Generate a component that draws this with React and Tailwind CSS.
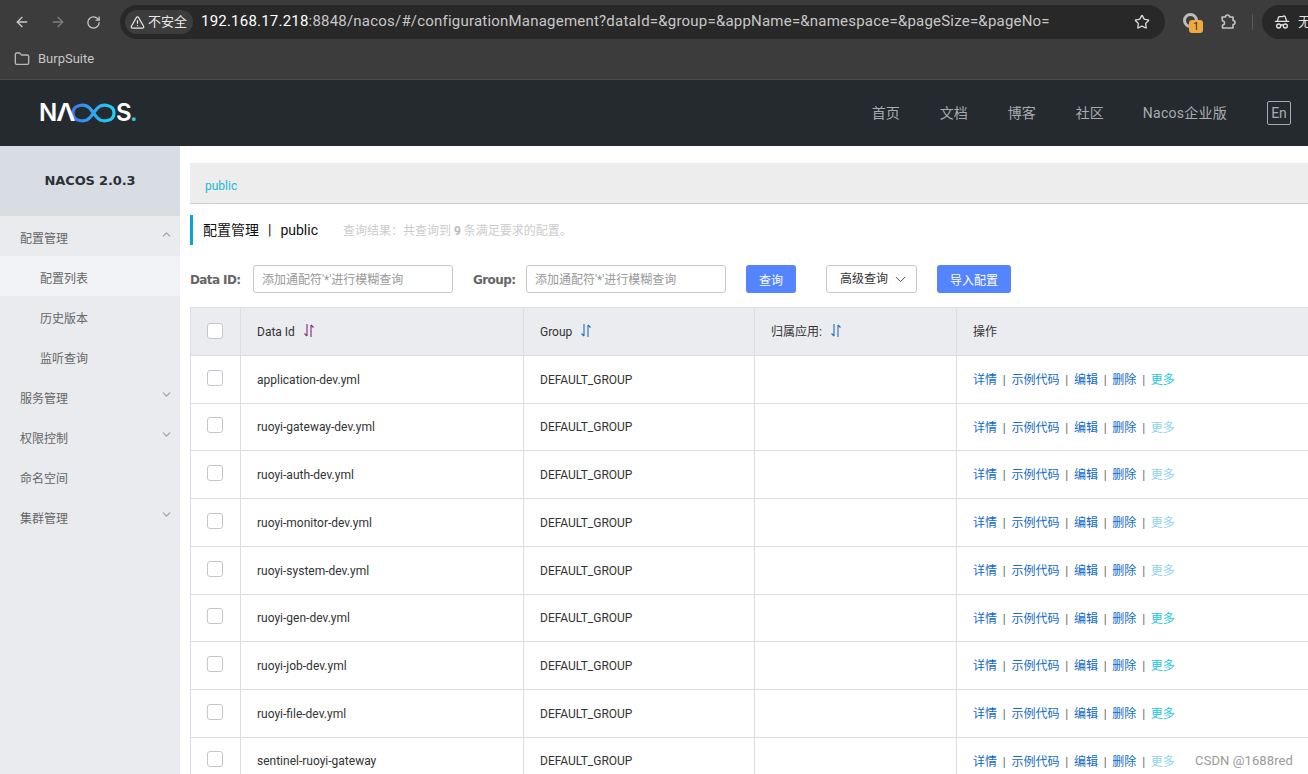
import { ArrowLeft, ArrowRight, RotateCw, Star, Folder, ChevronUp, ChevronDown, TriangleAlert, HatGlasses } from "lucide-react";

const FONT = "font-['Roboto','Noto_Sans_CJK_SC',sans-serif]";

const MENU = [
  { label: "配置管理", arrow: "up", active: true },
  { label: "配置列表", sub: true, selected: true },
  { label: "历史版本", sub: true },
  { label: "监听查询", sub: true },
  { label: "服务管理", arrow: "down" },
  { label: "权限控制", arrow: "down" },
  { label: "命名空间" },
  { label: "集群管理", arrow: "down" },
];

const ROWS = [
  { id: "application-dev.yml", h: "h-[48px]", more: "text-[#21c7e0]" },
  { id: "ruoyi-gateway-dev.yml", h: "h-[47px]", more: "text-[#8fd6e4]" },
  { id: "ruoyi-auth-dev.yml", h: "h-[48px]", more: "text-[#8fd6e4]" },
  { id: "ruoyi-monitor-dev.yml", h: "h-[48px]", more: "text-[#8fd6e4]" },
  { id: "ruoyi-system-dev.yml", h: "h-[48px]", more: "text-[#8fd6e4]" },
  { id: "ruoyi-gen-dev.yml", h: "h-[47px]", more: "text-[#21c7e0]" },
  { id: "ruoyi-job-dev.yml", h: "h-[48px]", more: "text-[#21c7e0]" },
  { id: "ruoyi-file-dev.yml", h: "h-[48px]", more: "text-[#21c7e0]" },
  { id: "sentinel-ruoyi-gateway", h: "h-[47px]", more: "text-[#8fd6e4]" },
];

function SortIcon({ color = "#1f6fb5" }) {
  return (
    <svg width="12" height="15" viewBox="0 0 12 15" fill="none" stroke={color} strokeWidth="1.1" className="ml-[8px] -mt-[2px]">
      <path d="M4 1v12M1.500 10.500 4 13" />
      <path d="M8 14V2M8 2l2.500 2.500" />
    </svg>
  );
}

function Checkbox() {
  return <div className="w-4 h-4 bg-white border border-[#c4c6cf] rounded-[3px]" />;
}

function Logo() {
  return (
    <div className="flex items-center h-[24px] -ml-px text-white font-['Inter',sans-serif] font-semibold text-[24px] leading-none">
      <span className="w-[17px]">N</span>
      <span className="ml-[1px] w-[14px] scale-x-110">Λ</span>
      <svg width="45" height="20" viewBox="0 0 45 20" fill="none" strokeWidth="3.2">
        <defs>
          <linearGradient id="nacosGrad" x1="0" x2="1" y1="0" y2="0">
            <stop offset="0" stopColor="#3a7bf0" />
            <stop offset="1" stopColor="#1fd2f5" />
          </linearGradient>
        </defs>
        <path d="M19 5.500C14 0 2 1.500 2 10s12 10 17 4.500L26 5.500C31 0 43 1.500 43 10s-12 10-17 4.500L19 5.500" stroke="url(#nacosGrad)" />
      </svg>
      <span className="w-[15px]">S</span>
      <span className="text-[#1fc8e8] -ml-px">.</span>
    </div>
  );
}

function BrowserBar() {
  return (
    <div className={`h-[80px] bg-[#3c3c3c] border-b border-[#4a4a4a] text-[#e3e3e3] ${FONT}`}>
      <div className="h-[40px] flex items-center pt-[4px]">
        <div className="w-[120px] flex items-center pl-[14px] gap-[20px] shrink-0">
          <ArrowLeft size={16} className="text-[#c9c9c9]" />
          <ArrowRight size={16} className="text-[#7d7d7d]" />
          <RotateCw size={15} className="text-[#c9c9c9]" />
        </div>
        <div className="w-[1045px] h-[34px] bg-[#282828] rounded-full flex items-center pl-[5px] pr-[15px] shrink-0">
          <div className="flex items-center gap-[3px] h-[24px] pl-[5px] pr-[6px] rounded-full bg-[#3d3d3d] text-[13px] text-[#e8e8e8]">
            <TriangleAlert size={15} />
            <span>不安全</span>
          </div>
          <div className="ml-[8px] flex-1 -mt-px text-[15px] tracking-[0.21px] whitespace-nowrap">
            <span className="text-white">192.168.17.218</span>
            <span className="text-[#c7c7c7]">:8848/nacos/#/configurationManagement?dataId=&amp;group=&amp;appName=&amp;namespace=&amp;pageSize=&amp;pageNo=</span>
          </div>
          <Star size={16} className="text-[#d8d8d8]" />
        </div>
        <div className="relative ml-[18px] w-[20px] h-[20px] shrink-0">
          <div className="w-[15px] h-[15px] rounded-full border-[3px] border-[#bcbcbc] mt-[1px]" />
          <div className="absolute left-[6px] top-[8px] w-[14px] h-[13px] rounded-[3px] bg-[#f0a93e] text-[#2a2a2a] text-[10px] leading-[13px] text-center">1</div>
        </div>
        <svg width="20" height="20" viewBox="0 0 20 20" fill="none" stroke="#c4c4c4" strokeWidth="1.6" strokeLinejoin="round" className="ml-[15px] shrink-0">
          <path d="M4 5h3.500a2 2 0 0 1 4 0H15v3.500a2 2 0 0 1 0 4V16H4.500v-3a2 2 0 0 0 0-4L4 5z" />
        </svg>
        <div className="ml-[14px] w-px h-[16px] bg-[#5a5a5a] shrink-0" />
        <div className="ml-[9px] flex-1 h-[34px] bg-[#282828] rounded-l-full flex items-center pl-[12px] gap-[8px] overflow-hidden whitespace-nowrap">
          <HatGlasses size={16} className="text-[#e3e3e3] shrink-0" />
          <span className="text-[13px]">无痕</span>
        </div>
      </div>
      <div className="h-[39px] flex items-center pl-[14px] gap-[8px] text-[#c7c7c7] text-[13px] pb-[1px]">
        <Folder size={16} className="text-[#b8b8b8]" />
        <span>BurpSuite</span>
      </div>
    </div>
  );
}

function Header() {
  return (
    <header className={`h-[66px] bg-[#252a2f] flex items-center pl-[40px] ${FONT}`}>
      <Logo />
      <nav className="ml-auto flex items-center text-[14px] text-[#a9acaf]">
        <a className="mr-[40px]">首页</a>
        <a className="mr-[40px]">文档</a>
        <a className="mr-[40px]">博客</a>
        <a className="mr-[39px]">社区</a>
        <a className="tracking-[0.25px]">Nacos企业版</a>
        <span className="ml-[40px] mr-[17px] w-[24px] h-[24px] border border-[#a9acaf] rounded-[2px] flex items-center justify-center">En</span>
      </nav>
    </header>
  );
}

function Sidebar() {
  return (
    <aside className="w-[180px] shrink-0 bg-[#e9ebef]">
      <div className="h-[70px] bg-[#d8dce3] flex items-center justify-center text-[13px] font-bold tracking-[-0.15px] text-[#2b3138] font-['DejaVu_Sans',sans-serif] pb-[1px]">
        NACOS 2.0.3
      </div>
      {MENU.map((item) => (
        <div
          key={item.label}
          className={`h-[40px] flex items-center justify-between text-[12px] text-[#666666] pt-[6px] ${item.sub ? "pl-[40px]" : "pl-[20px]"} pr-[7px] ${item.selected ? "bg-[#f2f3f7]" : ""}`}
        >
          <span>{item.label}</span>
          {item.arrow === "up" && <ChevronUp size={13} className="text-[#9aa0a8] -mt-[9px]" />}
          {item.arrow === "down" && <ChevronDown size={13} className="text-[#9aa0a8] -mt-[9px]" />}
        </div>
      ))}
    </aside>
  );
}

function Filters() {
  const label = "pt-px font-['DejaVu_Sans',sans-serif] font-bold text-[#666666] tracking-[-0.6px]";
  return (
    <div className="mt-[20px] h-[28px] flex items-center text-[12px]">
      <span className={`w-[63px] ${label}`}>Data ID:</span>
      <div className="w-[200px] h-[28px] border border-[#c4c6cf] rounded-[3px] flex items-center pl-[8px] pt-px text-[#999999]">添加通配符'*'进行模糊查询</div>
      <span className={`ml-[20px] w-[53px] ${label}`}>Group:</span>
      <div className="w-[200px] h-[28px] border border-[#c4c6cf] rounded-[3px] flex items-center pl-[8px] pt-px text-[#999999]">添加通配符'*'进行模糊查询</div>
      <button className="ml-[20px] w-[50px] h-[28px] bg-[#5584ff] rounded-[3px] text-white pt-[3px]">查询</button>
      <button className="ml-[30px] w-[91px] h-[28px] border border-[#c4c6cf] rounded-[3px] bg-white text-[#333333] flex items-center pl-[13px] gap-[4px]">
        高级查询
        <ChevronDown size={17} strokeWidth={1.4} className="text-[#444444]" />
      </button>
      <button className="ml-[20px] w-[74px] h-[28px] bg-[#5584ff] rounded-[3px] text-white pt-[3px]">导入配置</button>
    </div>
  );
}

function Actions({ more }) {
  const sep = <span className="mx-[5.75px] text-[#666666]">|</span>;
  return (
    <div className="flex items-center pt-px text-[12px] text-[#1269c7] whitespace-nowrap">
      <a>详情</a>{sep}<a>示例代码</a>{sep}<a>编辑</a>{sep}<a>删除</a>{sep}<a className={more}>更多</a>
    </div>
  );
}

function Table() {
  const cols = "grid grid-cols-[50px_283px_231px_202px_1fr]";
  const cell = "flex items-center pl-[16px] border-l border-[#dcdee3]";
  return (
    <div className="mt-[14px] text-[12px] text-[#333333] border-t border-[#dcdee3]">
      <div className={`${cols} h-[48px] bg-[#ebecf0] border-b border-[#dcdee3]`}>
        <div className="flex items-center justify-center pr-[2px] pb-[2px] border-l border-[#dcdee3]"><Checkbox /></div>
        <div className={cell}>Data Id<SortIcon color="#7a2a78" /></div>
        <div className={cell}>Group<SortIcon /></div>
        <div className={cell}>归属应用:<SortIcon /></div>
        <div className={cell}>操作</div>
      </div>
      {ROWS.map((row) => (
        <div key={row.id} className={`${cols} ${row.h} border-b border-[#dcdee3]`}>
          <div className="flex items-center justify-center pr-[2px] pb-[4px] border-l border-[#dcdee3]"><Checkbox /></div>
          <div className={cell}>{row.id}</div>
          <div className={cell}>DEFAULT_GROUP</div>
          <div className={cell} />
          <div className={cell}><Actions more={row.more} /></div>
        </div>
      ))}
    </div>
  );
}

function Content() {
  return (
    <main className="flex-1 min-w-0 pl-[10px] pt-[17px]">
      <div className="h-[41px] bg-[#ededed] border-b border-[#cfcfcf] flex items-center pl-[15px] pt-[5px] text-[12px] text-[#20b8d8]">
        public
      </div>
      <div className="mt-[11px] h-[30px] border-l-[3px] border-[#09a5d6] pl-[10px] flex items-center">
        <span className="text-[14px] text-[#111111]">配置管理</span>
        <span className="mx-[9px] text-[14px] text-[#111111]">|</span>
        <span className="text-[14px] text-[#111111]">public</span>
        <span className="ml-[25px] pt-px text-[12px] text-[#cccccc]">
          查询结果：共查询到 <b className="font-bold text-[#bbbbbb]">9</b> 条满足要求的配置。
        </span>
      </div>
      <Filters />
      <Table />
    </main>
  );
}

export default function App() {
  return (
    <div className={`relative w-[1308px] h-[774px] overflow-hidden bg-white ${FONT}`}>
      <BrowserBar />
      <Header />
      <div className="flex h-[628px]">
        <Sidebar />
        <Content />
      </div>
      <span className="absolute right-[15px] top-[751px] text-[13px] tracking-[0.1px] text-[#9a9a9a]">CSDN @1688red</span>
    </div>
  );
}
